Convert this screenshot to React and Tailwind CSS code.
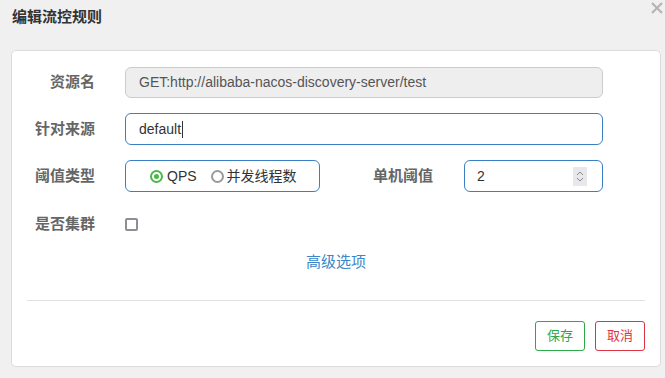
import React from "react";

const font = { fontFamily: '"Liberation Sans", Arial, "Noto Sans CJK SC", sans-serif' };

function Label({ children, className = "" }) {
  return (
    <div className={`w-[68px] shrink-0 text-right text-[15px] font-bold text-[#666] leading-5 ${className}`}>
      {children}
    </div>
  );
}

export default function App() {
  return (
    <div style={font} className="w-[665px] h-[378px] bg-[#f0f0f0] relative overflow-hidden">
      <div className="h-[50px] pl-[12px] pt-[7px]">
        <div className="text-[15px] font-bold text-[#333] leading-5">编辑流控规则</div>
      </div>
      <svg className="absolute right-[2px] top-[2px]" width="12" height="12" viewBox="0 0 12 12">
        <path d="M1 1 L11 11 M11 1 L1 11" stroke="#b5b5b5" strokeWidth="2.2" />
      </svg>

      <div className="ml-[11px] w-[650px] h-[317px] bg-white border border-[#dcdcdc] rounded-[5px] px-[15px] pt-[15px]">
        <div className="flex flex-col gap-[15px]">
          <div className="flex items-center h-[32px]">
            <Label>资源名</Label>
            <div className="ml-[30px] w-[478px] h-[31px] bg-[#eeeeee] border border-[#cccccc] rounded-[6px] flex items-center pl-[13px] text-[14px] text-[#555]">
              GET:http://alibaba-nacos-discovery-server/test
            </div>
          </div>
          <div className="flex items-center h-[32px]">
            <Label>针对来源</Label>
            <div className="ml-[30px] w-[478px] h-[32px] bg-white border border-[#3b7fc4] rounded-[6px] flex items-center pl-[13px] text-[14px] text-[#333]">
              default
              <span className="inline-block w-px h-[17px] bg-[#333] ml-[1px]" />
            </div>
          </div>
          <div className="flex items-center h-[32px]">
            <Label>阈值类型</Label>
            <div className="ml-[30px] w-[195px] h-[32px] border border-[#3b7fc4] rounded-[6px] flex items-center pl-[24px] text-[14px] text-[#333]">
              <span className="w-[13px] h-[13px] rounded-full border-2 border-[#4cb848] flex items-center justify-center mr-[4px]">
                <span className="w-[5px] h-[5px] rounded-full bg-[#4cb848]" />
              </span>
              <span>QPS</span>
              <span className="w-[13px] h-[13px] rounded-full border-2 border-[#9a9a9a] ml-[14px] mr-[3px]" />
              <span>并发线程数</span>
            </div>
            <div className="w-[113px] text-right text-[15px] font-bold text-[#666] leading-5">单机阈值</div>
            <div className="ml-[31px] w-[139px] h-[32px] border border-[#3b7fc4] rounded-[6px] flex items-center justify-between pl-[12px] pr-[15px] text-[14px] text-[#333]">
              <span>2</span>
              <span className="w-[14px] h-[19px] bg-[#e8e8ec] flex flex-col items-center justify-center gap-[1px]">
                <svg width="8" height="5" viewBox="0 0 8 5"><path d="M1 4 L4 1 L7 4" fill="none" stroke="#8a8a8a" strokeWidth="1" /></svg>
                <svg width="8" height="5" viewBox="0 0 8 5"><path d="M1 1 L4 4 L7 1" fill="none" stroke="#8a8a8a" strokeWidth="1" /></svg>
              </span>
            </div>
          </div>
          <div className="flex items-start h-[32px]">
            <Label className="mt-[7px]">是否集群</Label>
            <div className="ml-[30px] mt-[11px] w-[13px] h-[13px] border-2 border-[#8e8e96] rounded-[2px]" />
          </div>
        </div>

        <div className="mt-[13px] text-center text-[15px] text-[#3b87c9] leading-5">高级选项</div>

        <div className="mt-[28px] h-px bg-[#e2e2e2]" />

        <div className="mt-[20px] flex justify-end gap-[10px]">
          <div className="w-[50px] h-[30px] border border-[#2ba84a] rounded-[3px] flex items-center justify-center text-[13px] text-[#2ba84a]">保存</div>
          <div className="w-[50px] h-[30px] border border-[#dd3444] rounded-[3px] flex items-center justify-center text-[13px] text-[#dd3444]">取消</div>
        </div>
      </div>
    </div>
  );
}
